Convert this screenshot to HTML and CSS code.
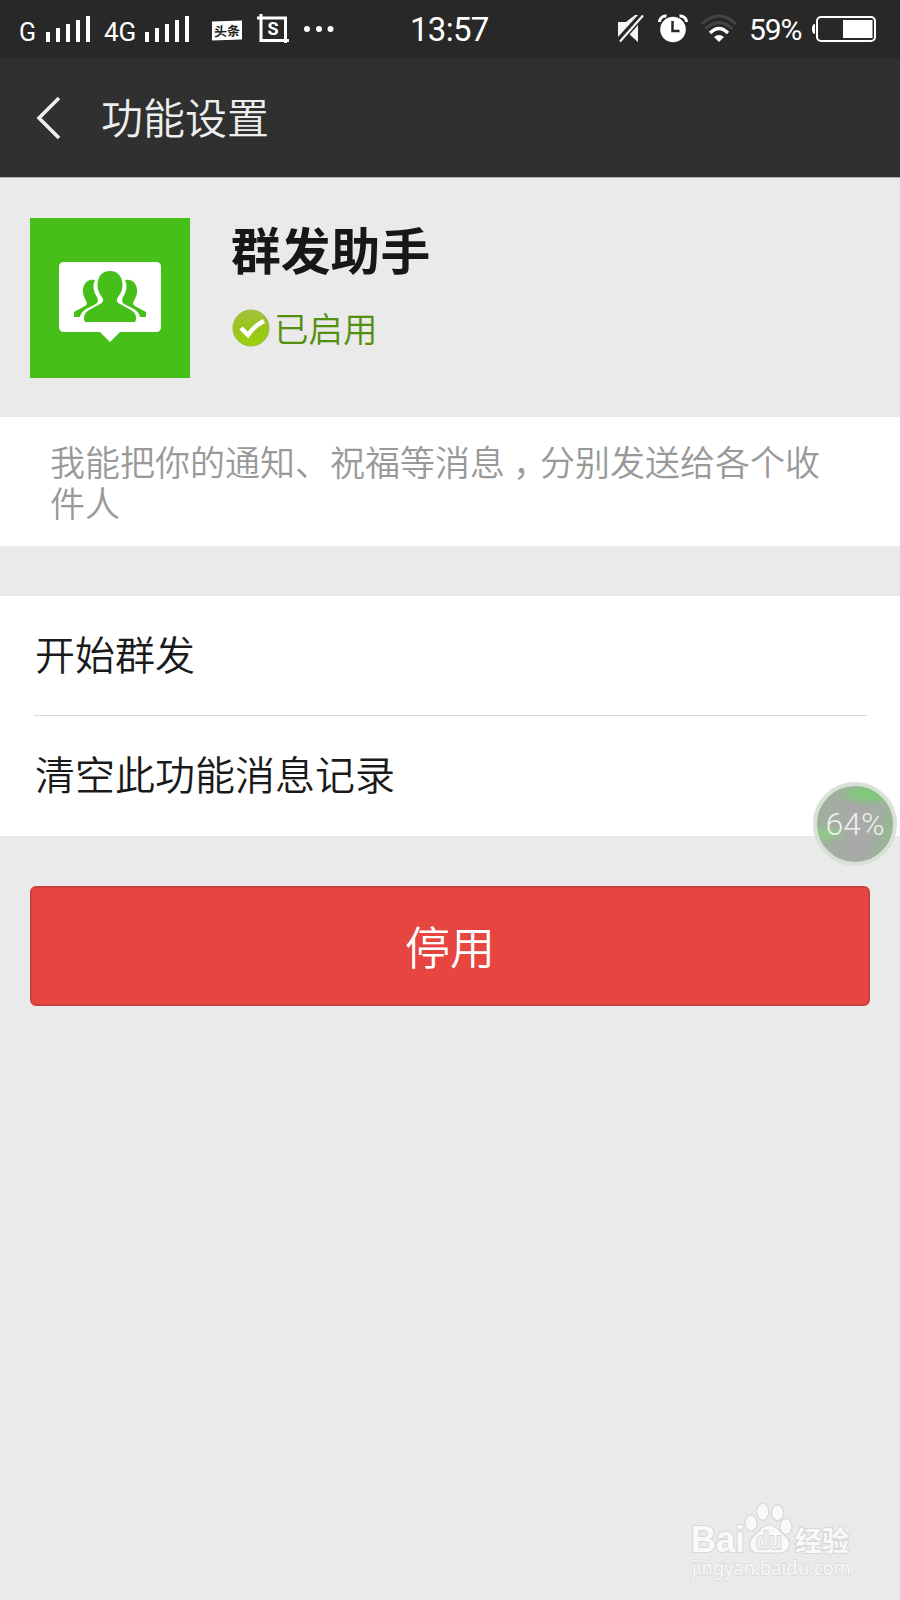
FILE: index.html
```html
<!DOCTYPE html>
<html lang="zh-CN">
<head>
<meta charset="utf-8">
<title>功能设置</title>
<link rel="stylesheet" href="styles.css">
</head>
<body>
<div class="status">
  <span class="net net-g">G</span>
  <svg class="signal" width="45" height="28" viewBox="0 0 45 28" fill="#fff"><path d="M0 17h4v10H0zM10 13h4v14h-4zM20 9h4v18h-4zM30 5h4v22h-4zM40 1h4v26h-4z"/></svg>
  <span class="net net-4g">4G</span>
  <svg class="signal" width="45" height="28" viewBox="0 0 45 28" fill="#fff"><path d="M0 17h4v10H0zM10 13h4v14h-4zM20 9h4v18h-4zM30 5h4v22h-4zM40 1h4v26h-4z"/></svg>
  <span class="news"><span class="news-text">头条</span></span>
  <svg class="crop" width="33" height="30" viewBox="0 0 33 30" fill="none" stroke="#fff" stroke-width="3"><path d="M0 4h28.500v25M4 0v26.500h28"/><text x="16" y="21" class="crop-s">S</text></svg>
  <svg class="dots" width="30" height="8" viewBox="0 0 30 8" fill="#fff"><circle cx="3" cy="4" r="3"/><circle cx="15" cy="4" r="3"/><circle cx="26.500" cy="4" r="3"/></svg>
  <span class="clock">13:57</span>
  <svg class="mute" width="28" height="30" viewBox="0 0 28 30" fill="#f4f4f4"><path d="M1 8h8L18 1h3L1 23zM21 10v18l-9-8z"/><path d="M3 27.500L26 1.500" stroke="#282828" stroke-width="5"/><path d="M3 27.500L26 1.500" stroke="#f4f4f4" stroke-width="2.200"/></svg>
  <svg class="alarm" width="30" height="30" viewBox="0 0 30 30"><circle cx="15" cy="15.500" r="12.800" fill="#fff"/><path d="M1.500 8C1.500 4 5 1.500 8.500 2M28.500 8c0-4-3.500-6.500-7-6" fill="none" stroke="#fff" stroke-width="3"/><path d="M14.500 7v10h7" fill="none" stroke="#282828" stroke-width="2.500"/></svg>
  <svg class="wifi" width="38" height="30" viewBox="0 0 38 30" fill="none"><path d="M2 10Q19-6 36 10" stroke="#444" stroke-width="3"/><path d="M5.500 15Q19 2 32.500 15" stroke="#444" stroke-width="3"/><path d="M10 19q9-9 18 0" stroke="#fff" stroke-width="3.500"/><path d="M14 23q5-4 10 0l-5 5z" fill="#fff"/></svg>
  <span class="pct">59%</span>
  <svg class="battery" width="64" height="26" viewBox="0 0 64 26"><path d="M3 8Q0 8 0 13t3 5z" fill="#fff"/><rect x="5" y="1" width="58" height="24" rx="4" fill="none" stroke="#fff" stroke-width="2"/><path d="M31 4h29.500v18H31z" fill="#fff"/></svg>
</div>
<header class="bar">
  <svg class="back" width="24" height="42" viewBox="0 0 24 42" fill="none" stroke="#eee" stroke-width="3.600"><path d="M23 1L3 21 23 41"/></svg>
  <h1 class="title">功能设置</h1>
</header>
<section class="profile">
  <svg class="avatar" width="160" height="160" viewBox="0 0 160 160">
    <path d="M0 0h160v160H0z" fill="#46c019"/>
    <path d="M34 44h92q5 0 5 5v60q0 5-5 5H90l-10 10-10-10H34q-5 0-5-5V49q0-5 5-5z" fill="#fff"/>
    <g fill="#46c019"><path d="M65 62C57 60 52 67 53 75c1 5 3 7 4 10q0 2-2 3L44 94v5h6q1-5 6-8l8-4q6-3 3-8-6-9-2-17zM95 62c8-2 13 5 12 13-1 5-3 7-4 10q0 2 2 3l11 6v5h-6q-1-5-6-8l-8-4q-6-3-3-8 6-9 2-17z"/>
    <path d="M80 53c8 0 12.500 6 12.500 14 0 7-3.500 10-5.500 14q-1 3 3 5l11 6q5 3 5 8 0 4-2 4H56q-2 0-2-4 0-5 5-8l11-6q4-2 3-5c-2-4-5.500-7-5.500-14 0-8 4.500-14 12.500-14z"/></g>
  </svg>
  <div class="info">
    <h2 class="name">群发助手</h2>
    <div class="state">
      <svg width="38" height="38" viewBox="0 0 38 38"><defs><linearGradient id="g" x1="0" y1="0" x2="0" y2="1"><stop offset="0" stop-color="#a3c33c"/><stop offset=".5" stop-color="#99c51c"/><stop offset="1" stop-color="#9bd20c"/></linearGradient></defs><circle cx="19" cy="19" r="18" fill="url(#g)" stroke="#96b840" stroke-width="1"/><path d="M9 19l7 7Q22 17 32 12" fill="none" stroke="#fff" stroke-width="4.500"/></svg>
      <span class="state-text">已启用</span>
    </div>
  </div>
</section>
<p class="desc">我能把你的通知、祝福等消息<span class="comma">，</span>分别发送给各个收件人</p>
<ul class="menu">
  <li class="row">开始群发</li>
  <li class="row">清空此功能消息记录</li>
</ul>
<button class="stop">停用</button>
<div class="bubble"><span>64%</span></div>
<svg class="mark" width="180" height="82" viewBox="0 0 180 82">
  <g class="mark-shape"><ellipse cx="70" cy="27" rx="6" ry="8"/><ellipse cx="81.700" cy="15.800" rx="6" ry="8.500"/><ellipse cx="96.500" cy="16.800" rx="6" ry="8"/><ellipse cx="105" cy="30.500" rx="6" ry="8"/><path d="M88 29c7 0 10 6 14 9 5 4 8 7 6 13-3 8-11 6-20 6s-17 2-19-6c-2-7 3-10 7-14 3-3 5-8 12-8z"/></g>
  <text class="mark-text mark-bai" x="10" y="56" textLength="54" lengthAdjust="spacingAndGlyphs">Bai</text>
  <text class="mark-text mark-du" x="75" y="53" textLength="26" lengthAdjust="spacingAndGlyphs">du</text>
  <text class="mark-text mark-cn" x="114" y="55">经验</text>
  <text class="mark-text mark-url" x="11" y="79" textLength="159" lengthAdjust="spacingAndGlyphs">jingyan.baidu.com</text>
</svg>
</body>
</html>
```
FILE: styles.css
```css
* { box-sizing: border-box; margin: 0; padding: 0; }
body {
  position: relative;
  width: 900px;
  height: 1600px;
  overflow: hidden;
  background: #eaeaea;
  color: #1a1a1a;
  font-family: "Liberation Sans", "Noto Sans CJK SC", sans-serif;
}
svg { display: block; flex: none; overflow: visible; }
.status {
  display: flex;
  align-items: center;
  height: 58px;
  padding-left: 19px;
  background: #282828;
  color: #fff;
  white-space: nowrap;
}
.net { font: 25px Roboto, sans-serif; padding-top: 6px; flex: none; }
.net-g { width: 27px; }
.net-4g { width: 41px; font-size: 26px; }
.signal { margin-top: -1px; }
.signal + .net-4g { margin-left: 13px; }
.news {
  flex: none;
  display: flex;
  align-items: center;
  justify-content: center;
  width: 30px;
  height: 19px;
  margin: 2px 0 0 22px;
  background: #fff;
  color: #222;
  transform: skewY(-2deg);
}
.news-text { font: bold 13px/18px "Noto Sans CJK SC", sans-serif; }
.crop { margin-left: 15px; }
.crop-s { fill: #fff; stroke: none; font: bold 18px Roboto, sans-serif; text-anchor: middle; }
.dots { margin-left: 14px; }
.clock { width: 80px; margin-left: 76px; font: 33px Roboto, sans-serif; letter-spacing: -0.7px; padding-top: 1px; }
.mute { margin-left: 127px; }
.alarm { margin-left: 13px; }
.wifi { margin-left: 12px; }
.pct { width: 56px; margin-left: 11px; font: 30px Roboto, sans-serif; letter-spacing: -1.1px; padding-top: 1px; }
.battery { margin-left: 7px; }
.bar {
  display: flex;
  align-items: center;
  height: 120px;
  padding-left: 36px;
  background: #303030;
  border-bottom: 1px solid #aaa;
}
.title {
  margin: -4px 0 0 41px;
  color: #eee;
  font: 350 42px/60px "Noto Sans CJK SC", sans-serif;
}
.profile { display: flex; height: 239px; padding: 40px 30px 0; }
.avatar { margin-top: -0.500px; }
.info { margin-left: 41px; }
.name { margin-top: -2px; font: bold 49.800px/64px "Noto Sans CJK SC", sans-serif; color: #17171a; }
.state {
  display: flex;
  align-items: center;
  margin: 29px 0 0 1px;
  color: #548f0e;
  font: 350 34.500px/40px "Noto Sans CJK SC", sans-serif;
}
.state-text { margin: -3px 0 0 4px; }
.desc {
  height: 129px;
  padding: 23px 50px 0;
  background: #fff;
  color: #999;
  font: 350 35px/41px "Noto Sans CJK SC", sans-serif;
}
.comma { margin: 0 9.500px 0 8px; font-feature-settings: "halt"; }
.menu { margin-top: 50px; background: #fff; list-style: none; }
.row {
  height: 120px;
  margin: 0 33px 0 34px;
  padding-left: 1px;
  font: 350 40px/115px "Noto Sans CJK SC", sans-serif;
}
.row + .row { border-top: 1px solid #d9d9d9; margin-top: -1px; height: 121px; line-height: 114px; }
.stop {
  display: block;
  width: 840px;
  height: 120px;
  margin: 50px 30px 0;
  border: 2px solid #cc403e;
  border-radius: 6px;
  background: #e64540;
  color: #fff;
  font: 350 45px/112px "Noto Sans CJK SC", sans-serif;
}
.bubble {
  position: absolute;
  left: 813px;
  top: 782px;
  display: flex;
  align-items: center;
  justify-content: center;
  width: 84px;
  height: 84px;
  border: 4px solid #d8e0d7;
  border-radius: 50%;
  background:
    radial-gradient(ellipse 34px 12px at 52px 8px, #83c77c 40%, transparent),
    radial-gradient(ellipse 24px 10px at 8px 48px, #8fc889 20%, transparent),
    linear-gradient(100deg, #9db09a, #a8aaa8 45% 65%, #93b98f);
  color: #eee;
  font: 300 32px Roboto, sans-serif;
}
.mark { position: absolute; left: 681px; top: 1496px; }
.mark-shape { fill: #f9f9f9; stroke: #d7d7d7; stroke-width: 1.2px; }
.mark-text { fill: #f9f9f9; stroke: #d7d7d7; stroke-width: 2px; paint-order: stroke; }
.mark-bai { font: bold 36px "Liberation Sans", sans-serif; }
.mark-du { font: bold 24px "Liberation Sans", sans-serif; fill: #eee; }
.mark-cn { font: bold 27px "Noto Sans CJK SC", sans-serif; }
.mark-url { font: 20px "Noto Sans", sans-serif; stroke-width: 1.4px; }
```
